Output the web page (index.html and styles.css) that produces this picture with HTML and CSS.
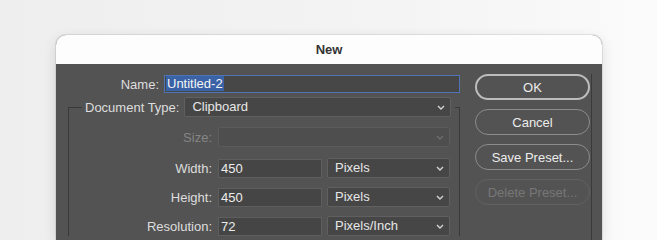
FILE: index.html
```html
<!DOCTYPE html>
<html lang="en">
<head>
    <meta charset="UTF-8">
    <meta name="viewport" content="width=device-width, initial-scale=1.0">
    <title>New</title>
    <link rel="stylesheet" href="styles.css">
</head>
<body>

<div class="window">
    <div class="titlebar">New</div>
    <div class="content">
        <div class="form">
            <div class="name-row">
                <span class="label name-label">Name:</span>
                <div class="name-field"><span class="selected">Untitled-2</span></div>
            </div>

            <fieldset class="group">
                <legend class="legend">
                    <span class="label">Document Type:</span>
                    <div class="select doc-select">Clipboard<svg class="chev" viewBox="0 0 8 5"><polyline points="1,1 4,4 7,1"/></svg></div>
                </legend>

                <div class="row row-size">
                    <span class="label row-label dim">Size:</span>
                    <div class="select size-select disabled"><svg class="chev" viewBox="0 0 8 5"><polyline points="1,1 4,4 7,1"/></svg></div>
                </div>
                <div class="row">
                    <span class="label row-label">Width:</span>
                    <div class="text">450</div>
                    <div class="select unit">Pixels<svg class="chev" viewBox="0 0 8 5"><polyline points="1,1 4,4 7,1"/></svg></div>
                </div>
                <div class="row">
                    <span class="label row-label">Height:</span>
                    <div class="text">450</div>
                    <div class="select unit">Pixels<svg class="chev" viewBox="0 0 8 5"><polyline points="1,1 4,4 7,1"/></svg></div>
                </div>
                <div class="row">
                    <span class="label row-label">Resolution:</span>
                    <div class="text">72</div>
                    <div class="select unit">Pixels/Inch<svg class="chev" viewBox="0 0 8 5"><polyline points="1,1 4,4 7,1"/></svg></div>
                </div>
            </fieldset>
        </div>

        <div class="buttons">
            <button class="btn btn-ok">OK</button>
            <button class="btn">Cancel</button>
            <button class="btn">Save Preset...</button>
            <button class="btn btn-off">Delete Preset...</button>
        </div>
    </div>
</div>

</body>
</html>
```

FILE: styles.css
```css
body {
    margin: 0;
    font-family: "Liberation Sans", Arial, sans-serif;
    font-size: 13px;
    background: linear-gradient(90deg, #eeeeee 0%, #f4f4f4 60%, #fbfbfb 100%);
    height: 240px;
    overflow: hidden;
}
.window {
    margin: 35px 0 0 56px;
    width: 546px;
    height: 205px;
    border-radius: 10px 10px 0 0;
    overflow: hidden;
    background-color: #535353;
    box-shadow: 0 0 0 1px rgba(0, 0, 0, 0.08), 0 4px 14px rgba(0, 0, 0, 0.12);
}
.titlebar {
    height: 29px;
    line-height: 29px;
    background-color: #fdfdfd;
    color: #333;
    font-weight: bold;
    text-align: center;
}
.content {
    display: flex;
    padding-top: 10px;
}
.form {
    width: 419px;
}
.label {
    color: #dedede;
    white-space: nowrap;
}
.dim {
    color: #858585;
}
.name-row {
    display: flex;
    align-items: center;
    margin-top: 1px;
}
.name-label {
    width: 103px;
    text-align: right;
    margin-right: 5px;
}
.name-field {
    box-sizing: border-box;
    width: 296px;
    height: 18px;
    border: 1px solid #4f74b4;
    background-color: #474747;
    padding-left: 1px;
    line-height: 16px;
}
.selected {
    background-color: #3a62a6;
    color: #f4f4f4;
    padding: 0 1px;
}
.group {
    box-sizing: border-box;
    width: 392px;
    min-width: 0;
    margin: 4px 0 0 12px;
    padding: 10px 0 0 13px;
    border: 1px solid #393939;
    border-bottom: none;
}
.legend {
    display: flex;
    align-items: center;
    padding: 0 4px 0 3px;
}
.legend .label {
    margin-right: 5px;
}
.select {
    box-sizing: border-box;
    position: relative;
    height: 20px;
    line-height: 18px;
    padding-left: 7px;
    border: 1px solid #606060;
    border-radius: 2px;
    background-color: #464646;
    color: #e6e6e6;
}
.chev {
    position: absolute;
    right: 5px;
    top: 7px;
    width: 8px;
    height: 5px;
    fill: none;
    stroke: #d4d4d4;
    stroke-width: 1.4;
}
.doc-select {
    width: 267px;
}
.row {
    display: flex;
    align-items: center;
    height: 20px;
    margin-top: 9px;
}
.row-size {
    margin-top: 0;
}
.row-size + .row {
    margin-top: 11px;
}
.row-label {
    width: 130px;
    text-align: right;
    margin-right: 6px;
}
.size-select {
    width: 232px;
}
.disabled {
    background-color: #4e4e4e;
    border-color: #5b5b5b;
}
.disabled .chev {
    stroke: #6e6e6e;
}
.text {
    box-sizing: border-box;
    width: 104px;
    height: 19px;
    line-height: 17px;
    padding-left: 2px;
    border: 1px solid #5e5e5e;
    background-color: #454545;
    color: #ececec;
    margin-right: 5px;
}
.unit {
    width: 123px;
}
.buttons {
    display: flex;
    flex-direction: column;
    gap: 9px;
    padding-right: 1px;
    border-right: 1px solid #3a3a3a;
    height: 200px;
}
.btn {
    width: 115px;
    height: 26px;
    border: 1px solid #8c8c8c;
    border-radius: 13px;
    background-color: #535353;
    color: #ececec;
    font-family: "Liberation Sans", Arial, sans-serif;
    font-size: 13px;
    padding: 0;
}
.btn-ok {
    border: 2px solid #bdbdbd;
}
.btn-off {
    border-color: #626262;
    color: #777;
}
```
